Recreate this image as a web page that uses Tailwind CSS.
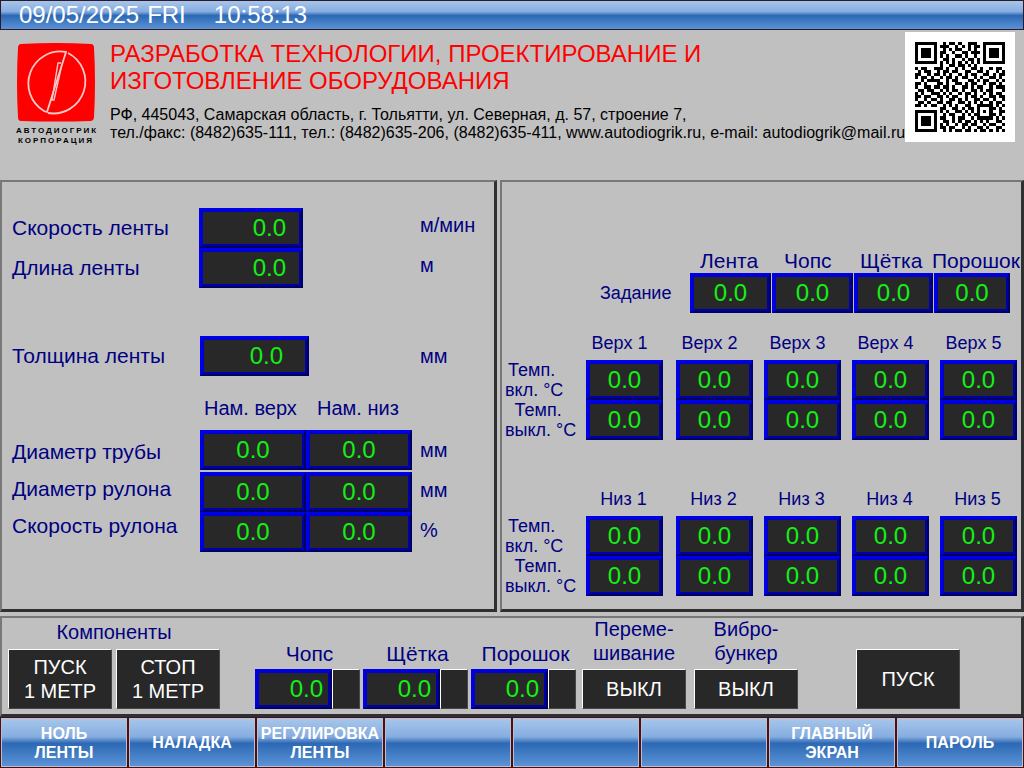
<!DOCTYPE html>
<html lang="ru">
<head>
    <meta charset="UTF-8" />
    <meta name="viewport" content="width=device-width, initial-scale=1.0" />
    <title>Автодиогрик - Главный экран</title>
    <script src="https://cdn.jsdelivr.net/npm/@tailwindcss/browser@4"></script>
</head>
<body class="bg-[#c0c0c0] text-[#000080] font-['Liberation_Sans',Arial,sans-serif] min-h-screen flex flex-col">

<!-- Date and time -->
<div class="h-[30px] border border-[#301828] bg-[linear-gradient(#a6c6ea,#86ace0_38%,#2c68b4_52%,#5b93d6)]">
    <div class="flex items-center h-full pl-[18px] text-2xl leading-6 text-white whitespace-pre"><span>09/05/2025</span><span class="ml-2">FRI</span><time class="ml-7">10:58:13</time></div>
</div>

<!-- Company header -->
<header class="flex items-start h-[150px] pt-0.5 pr-2.5 pl-4">
    <div class="w-20 mt-2.5 shrink-0">
        <svg class="block w-20 h-20" viewBox="0 0 80 80" fill="none">
            <path d="M5 2Q40 0 75 2Q78 2 78 6Q80 40 78 75Q78 78 75 79Q40 80 5 79Q2 79 2 75Q0 40 2 6Q2 2 5 2Z" fill="#ff0000"/>
            <g stroke="#f8c8c8" stroke-width="1.8">
                <path d="M50 10A32 32 0 0 0 28 69L31 70L50 10Z"/>
                <path d="M52 11A32 32 0 0 1 32 71"/>
                <path d="M45 21L42 21L36 58L38 58L46 22" stroke-width="1.4"/>
            </g>
        </svg>
        <div class="mt-1 text-[8px] leading-[10px] font-bold text-black text-center tracking-[2px] whitespace-nowrap">АВТОДИОГРИК<br>КОРПОРАЦИЯ</div>
    </div>
    <div class="ml-3.5 mt-2 flex-1 whitespace-nowrap">
        <h1 class="text-2xl leading-[27px] text-[#ff0000]">РАЗРАБОТКА ТЕХНОЛОГИИ, ПРОЕКТИРОВАНИЕ И<br>ИЗГОТОВЛЕНИЕ ОБОРУДОВАНИЯ</h1>
        <p class="mt-3 text-base leading-[18px] text-black">РФ, 445043, Самарская область, г. Тольятти, ул. Северная, д. 57, строение 7,<br>тел./факс: (8482)635-111, тел.: (8482)635-206, (8482)635-411, www.autodiogrik.ru, e-mail: autodiogrik@mail.ru</p>
    </div>
    <div class="w-[110px] h-[110px] shrink-0 bg-white p-2.5">
        <svg id="qr" class="block w-full h-full" viewBox="0 0 29 29" shape-rendering="crispEdges"></svg>
    </div>
</header>

<main class="flex-1 flex flex-col gap-1">
    <div class="flex-1 grid grid-cols-[497fr_524fr] gap-[3px]">

        <!-- Belt and winding -->
        <section class="border-t-2 border-l-2 border-r-3 border-b-3 border-t-[#787878] border-l-[#787878] border-r-[#303030] border-b-[#303030] pl-2.5 pt-[26px] text-xl leading-6">
            <div class="grid grid-cols-[187px_221px_auto] items-center">
                <label for="speed" class="text-[21px]">Скорость ленты</label>
                <input id="speed" readonly value="0.0" class="w-[104px] h-10 bg-[#282828] border-2 border-t-[#0000e8] border-l-[#0000e8] border-r-[#000060] border-b-[#000060] shadow-[inset_2px_2px_0_#0000d0,inset_-2px_-2px_0_#0000a8] text-2xl text-[#14f014] text-right pr-[15px]">
                <span class="pb-1.5">м/мин</span>
                <label for="length" class="text-[21px]">Длина ленты</label>
                <input id="length" readonly value="0.0" class="w-[104px] h-10 bg-[#282828] border-2 border-t-[#0000e8] border-l-[#0000e8] border-r-[#000060] border-b-[#000060] shadow-[inset_2px_2px_0_#0000d0,inset_-2px_-2px_0_#0000a8] text-2xl text-[#14f014] text-right pr-[15px]">
                <span class="pb-1.5">м</span>
            </div>
            <div class="mt-12 grid grid-cols-[188px_220px_auto] items-center">
                <label for="thickness" class="text-[21px]">Толщина ленты</label>
                <input id="thickness" readonly value="0.0" class="w-[109px] h-10 bg-[#282828] border-2 border-t-[#0000e8] border-l-[#0000e8] border-r-[#000060] border-b-[#000060] shadow-[inset_2px_2px_0_#0000d0,inset_-2px_-2px_0_#0000a8] text-2xl text-[#14f014] text-right pr-6">
                <span>мм</span>
            </div>
            <div class="mt-5 grid grid-cols-[188px_106px_106px_auto] items-center">
                <span></span><span class="pl-1 whitespace-nowrap">Нам. верх</span><span class="pl-[11px] whitespace-nowrap">Нам. низ</span><span></span>
            </div>
            <div class="mt-2.5 flex">
                <div class="w-[188px] pt-[3px] flex flex-col text-[21px] leading-[37px] whitespace-nowrap">
                    <label for="wind0">Диаметр трубы</label>
                    <label for="wind1">Диаметр рулона</label>
                    <label for="wind2">Скорость рулона</label>
                </div>
                <div id="winding" class="grid grid-cols-[106px_106px]"></div>
                <div class="pl-2 flex flex-col leading-10">
                    <span>мм</span>
                    <span>мм</span>
                    <span>%</span>
                </div>
            </div>
        </section>

        <!-- Setpoints and heaters -->
        <section class="border-t-2 border-l-2 border-r-3 border-b-3 border-t-[#787878] border-l-[#787878] border-r-[#303030] border-b-[#303030] pl-[3px] pt-[67px]">
            <div class="grid grid-cols-[185px_82px_82px_80px_76px] items-center text-[21px] leading-6 whitespace-nowrap">
                <span></span>
                <label for="set1" class="pl-2.5">Лента</label>
                <label for="set2" class="pl-3">Чопс</label>
                <label for="set3" class="pl-1.5">Щётка</label>
                <label for="set4" class="-ml-0.5">Порошок</label>
                <span class="pl-[95px] text-lg">Задание</span>
                <input id="set1" readonly value="0.0" class="w-[81px] h-10 bg-[#282828] border-2 border-t-[#0000e8] border-l-[#0000e8] border-r-[#000060] border-b-[#000060] shadow-[inset_2px_2px_0_#0000d0,inset_-2px_-2px_0_#0000a8] text-2xl text-[#14f014] text-center">
                <input id="set2" readonly value="0.0" class="w-[81px] h-10 bg-[#282828] border-2 border-t-[#0000e8] border-l-[#0000e8] border-r-[#000060] border-b-[#000060] shadow-[inset_2px_2px_0_#0000d0,inset_-2px_-2px_0_#0000a8] text-2xl text-[#14f014] text-center">
                <input id="set3" readonly value="0.0" class="w-[79px] h-10 bg-[#282828] border-2 border-t-[#0000e8] border-l-[#0000e8] border-r-[#000060] border-b-[#000060] shadow-[inset_2px_2px_0_#0000d0,inset_-2px_-2px_0_#0000a8] text-2xl text-[#14f014] text-center">
                <input id="set4" readonly value="0.0" class="w-[76px] h-10 bg-[#282828] border-2 border-t-[#0000e8] border-l-[#0000e8] border-r-[#000060] border-b-[#000060] shadow-[inset_2px_2px_0_#0000d0,inset_-2px_-2px_0_#0000a8] text-2xl text-[#14f014] text-center">
            </div>
            <div id="heatTop" class="mt-5 grid grid-cols-[81px_90px_88px_88px_88px_77px] text-lg leading-5 whitespace-nowrap"></div>
            <div id="heatBottom" class="mt-[49px] grid grid-cols-[81px_90px_88px_88px_88px_77px] text-lg leading-5 whitespace-nowrap"></div>
        </section>
    </div>

    <!-- Components -->
    <section class="h-[101px] flex items-end border-t-2 border-l-2 border-r-3 border-b-3 border-t-[#787878] border-l-[#787878] border-r-[#303030] border-b-[#303030] pl-1.5 pb-[5px] text-xl leading-6 whitespace-nowrap">
        <div class="w-[212px]">
            <h2 class="text-center mb-[5px]">Компоненты</h2>
            <div class="flex gap-1">
                <button class="w-[104px] h-[60px] bg-[#282828] border border-t-white border-l-white border-r-[#484848] border-b-[#484848] text-white">ПУСК<br>1 МЕТР</button>
                <button class="w-[104px] h-[60px] bg-[#282828] border border-t-white border-l-white border-r-[#484848] border-b-[#484848] text-white">СТОП<br>1 МЕТР</button>
            </div>
        </div>
        <div id="feeders" class="ml-[35px] flex gap-[3px]"></div>
        <div class="ml-1.5 flex gap-2">
            <div class="w-[104px] text-center">
                <label for="mixer" class="block mb-1">Переме-<br>шивание</label>
                <button id="mixer" class="block w-full h-10 bg-[#282828] border border-t-white border-l-white border-r-[#484848] border-b-[#484848] text-white">ВЫКЛ</button>
            </div>
            <div class="w-[104px] text-center">
                <label for="vibro" class="block mb-1">Вибро-<br>бункер</label>
                <button id="vibro" class="block w-full h-10 bg-[#282828] border border-t-white border-l-white border-r-[#484848] border-b-[#484848] text-white">ВЫКЛ</button>
            </div>
        </div>
        <button class="ml-[58px] w-[104px] h-[60px] bg-[#282828] border border-t-white border-l-white border-r-[#484848] border-b-[#484848] text-white">ПУСК</button>
    </section>
</main>

<nav id="menu" class="h-[51px] grid grid-cols-8"></nav>

<script>
    const field = 'h-10 bg-[#282828] border-2 border-t-[#0000e8] border-l-[#0000e8] border-r-[#000060] border-b-[#000060] shadow-[inset_2px_2px_0_#0000d0,inset_-2px_-2px_0_#0000a8] text-2xl text-[#14f014]';

    // winding rows: name, spacing below
    const winding = [
        ['Диаметр трубы', 'mb-0.5'],
        ['Диаметр рулона', ''],
        ['Скорость рулона', ''],
    ];
    document.getElementById('winding').innerHTML = winding.map(([name, gap], i) => `
        <input id="wind${i}" readonly value="0.0" class="${field} ${gap} w-[106px] text-center">
        <input aria-label="${name}, низ" readonly value="0.0" class="${field} ${gap} w-[106px] text-center">`).join('');

    // heater zones
    function heaters(id, zone, pad) {
        const zones = [1, 2, 3, 4, 5];
        let html = '<span></span>' + zones.map(n => `<span class="w-[77px] text-center mb-[7px] ${pad}">${zone} ${n}</span>`).join('');
        for (const mode of ['вкл.', 'выкл.']) {
            html += `<div><span class="inline-block text-center">Темп.&nbsp;<br>${mode} °C</span></div>`;
            html += zones.map(n => `<input aria-label="${zone} ${n}, ${mode}" readonly value="0.0" class="${field} w-[77px] text-center">`).join('');
        }
        document.getElementById(id).innerHTML = html;
    }
    heaters('heatTop', 'Верх', 'pr-2.5');
    heaters('heatBottom', 'Низ', 'pr-0.5');

    document.getElementById('feeders').innerHTML = ['Чопс', 'Щётка', 'Порошок'].map((name, i) => `
        <div class="w-[105px]">
            <label for="feed${i}" class="block text-center pl-1 mb-[3px] text-[21px]">${name}</label>
            <div class="flex">
                <input id="feed${i}" readonly value="0.0" class="${field} w-[77px] text-right pr-[7px]">
                <button aria-label="${name}" class="flex-1 bg-[#282828] border border-t-white border-l-white border-r-[#484848] border-b-[#484848]"></button>
            </div>
        </div>`).join('');

    const menu = ['НОЛЬ<br>ЛЕНТЫ', 'НАЛАДКА', 'РЕГУЛИРОВКА<br>ЛЕНТЫ', '', '', '', 'ГЛАВНЫЙ<br>ЭКРАН', 'ПАРОЛЬ'];
    document.getElementById('menu').innerHTML = menu.map(text => `
        <div class="bg-[#301828] p-px">
            <button class="block w-full h-full border border-[#d8b4bc] bg-[linear-gradient(#a6c6ea,#86ace0_38%,#2c68b4_52%,#5b93d6)] text-base leading-[19px] font-bold text-white whitespace-nowrap">${text}</button>
        </div>`).join('');

    // QR modules, one string per row
    const qr = [
        '#######..#.##.#..###..#######',
        '#.....#.###..#.#.#.##.#.....#',
        '#.###.#..#.#.##..#.#..#.###.#',
        '#.###.#.##..#..##.###.#.###.#',
        '#.###.#.#.#..##.#..#..#.###.#',
        '#.....#..##.#..#.##.#.#.....#',
        '#######.#.#.#.#.#.#.#.#######',
        '........#..##.##.#.#.........',
        '#.##..###.#..#.#..##.#..#.##.',
        '.#.##..#.##.##..##..##.#..#.#',
        '##..#.##.#.#..#.#.##..##.#.##',
        '#.##.#..#.##.#.##..#.#..##.#.',
        '..#.####..#.##...##.#.##..#.#',
        '##.#...##.#..##.#.##..#.##.#.',
        '#..##.##.##.#..##.#.##..#.###',
        '.##.##..#.#.##.#..##.#.##...#',
        '#.#..###.#.#..#.##.#..#.#.##.',
        '##.##..##.#.##..#.##.#..##.##',
        '#..#.##.#..##.#.#..##.##.#..#',
        '.##.#..##.##..##.#.#.#..#.##.',
        '##.#.##..#.#.#..##..#####.#.#',
        '........##..##.#.##.#...##.#.',
        '#######.#.#..##.#.#.#.#.#..##',
        '#.....#..#.##..#.#.##...##.#.',
        '#.###.#.##..#.##..#.#####.#.#',
        '#.###.#..##.#.#.##.#.#.#..##.',
        '#.###.#.#.#..#.##.##..#.##..#',
        '#.....#.##.##..#.#..##.#..##.',
        '#######..#.#.##.##.#.##.#.#.#',
    ];
    document.getElementById('qr').innerHTML = qr.map((row, y) => [...row].map((c, x) =>
        c === '#' ? `<rect x="${x}" y="${y}" width="1" height="1"/>` : '').join('')).join('');
</script>
</body>
</html>
